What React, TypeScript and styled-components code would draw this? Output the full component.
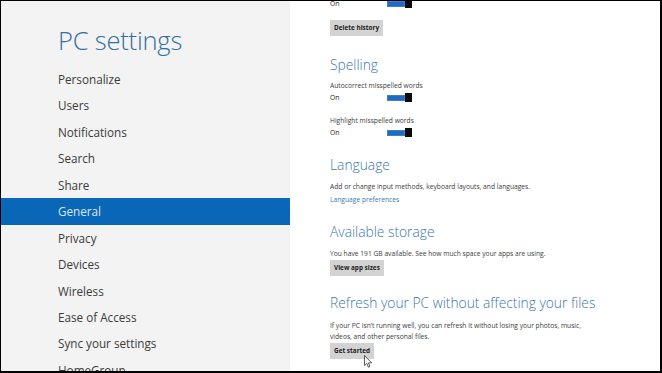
import React from "react";
import styled, { createGlobalStyle } from "styled-components";

const Global = createGlobalStyle`
  html, body { margin: 0; padding: 0; background: #ffffff; }
  * { box-sizing: border-box; }
`;

const Frame = styled.div`
  width: 662px;
  height: 373px;
  border-style: solid;
  border-color: #000;
  border-width: 1px 2px 2px 1px;
  display: flex;
  overflow: hidden;
  position: relative;
  background: #ffffff;
  font-family: "Open Sans", "Noto Sans", sans-serif;
`;

const Sidebar = styled.nav`
  width: 289px;
  flex: none;
  background: #f3f3f3;
  padding-top: 21px;
  display: flex;
  flex-direction: column;
`;

const Title = styled.h1`
  margin: 0;
  padding-left: 57px;
  font-size: 25.5px;
  line-height: 36px;
  font-weight: 300;
  color: #336f9f;
  letter-spacing: -0.2px;
`;

const NavList = styled.ul`
  list-style: none;
  margin: 8px 0 0;
  padding: 0;
`;

const NavItem = styled.li<{ $active?: boolean }>`
  height: 26.45px;
  line-height: 26.45px;
  padding-left: 57px;
  font-size: 11.7px;
  color: ${(p) => (p.$active ? "#dbe9f7" : "#3a3a3a")};
  background: ${(p) => (p.$active ? "#0a66b6" : "transparent")};
  white-space: nowrap;
`;

const Main = styled.main`
  flex: 1;
  padding-left: 40px;
  display: flex;
  flex-direction: column;
  align-items: flex-start;
`;

const Heading = styled.h2<{ $mt: number }>`
  margin: ${(p) => p.$mt}px 0 0;
  font-size: 13.8px;
  line-height: 20px;
  height: 20px;
  font-weight: 300;
  color: #3a78a9;
  white-space: nowrap;
`;

const Text = styled.p<{ $mt: number; $link?: boolean }>`
  margin: ${(p) => p.$mt}px 0 0;
  font-size: 6.7px;
  line-height: 11px;
  color: ${(p) => (p.$link ? "#3b78b5" : "#3c3c3c")};
  white-space: nowrap;
`;

const ToggleRow = styled.div<{ $mt: number }>`
  margin-top: ${(p) => p.$mt}px;
  height: 9px;
  display: flex;
  align-items: center;
`;

const ToggleLabel = styled.span`
  width: 57px;
  font-size: 6.8px;
  line-height: 9px;
  color: #222;
`;

const Track = styled.span`
  width: 25px;
  height: 9px;
  display: flex;
  align-items: center;
`;

const Fill = styled.span`
  width: 18px;
  height: 6px;
  background: #1d6cc2;
  border: 1px solid #3f7fc7;
`;

const Thumb = styled.span`
  width: 7px;
  height: 9px;
  background: #0b0b0b;
`;

const Button = styled.button<{ $mt: number }>`
  margin: ${(p) => p.$mt}px 0 0;
  height: 16px;
  padding: 0 4px;
  border: none;
  background: #d3d3d3;
  font-family: "Open Sans", "Noto Sans", sans-serif;
  font-size: 6.4px;
  font-weight: 700;
  color: #1c1c1c;
  line-height: 16px;
  white-space: nowrap;
`;

const Cursor = styled.svg`
  position: absolute;
  left: 363px;
  top: 354px;
`;

const Toggle = ({ mt }: { mt: number }) => (
  <ToggleRow $mt={mt}>
    <ToggleLabel>On</ToggleLabel>
    <Track>
      <Fill />
      <Thumb />
    </Track>
  </ToggleRow>
);

const navItems = [
  "Personalize",
  "Users",
  "Notifications",
  "Search",
  "Share",
  "General",
  "Privacy",
  "Devices",
  "Wireless",
  "Ease of Access",
  "Sync your settings",
  "HomeGroup",
];

export default function App() {
  return (
    <>
      <Global />
      <Frame>
        <Sidebar>
          <Title>PC settings</Title>
          <NavList>
            {navItems.map((n) => (
              <NavItem key={n} $active={n === "General"}>
                {n}
              </NavItem>
            ))}
          </NavList>
        </Sidebar>
        <Main>
          <Toggle mt={-2} />
          <Button $mt={12}>Delete history</Button>
          <Heading $mt={19}>Spelling</Heading>
          <Text $mt={4.5}>Autocorrect misspelled words</Text>
          <Toggle mt={2.5} />
          <Text $mt={12.5}>Highlight misspelled words</Text>
          <Toggle mt={2.5} />
          <Heading $mt={18}>Language</Heading>
          <Text $mt={6}>Add or change input methods, keyboard layouts, and languages.</Text>
          <Text $mt={1.5} $link>
            Language preferences
          </Text>
          <Heading $mt={17.5}>Available storage</Heading>
          <Text $mt={5.5}>You have 191 GB available. See how much space your apps are using.</Text>
          <Button $mt={1.5}>View app sizes</Button>
          <Heading $mt={17}>Refresh your PC without affecting your files</Heading>
          <Text $mt={7}>
            If your PC isn’t running well, you can refresh it without losing your photos, music,
            <br />
            videos, and other personal files.
          </Text>
          <Button $mt={1}>Get started</Button>
        </Main>
        <Cursor width="9" height="13" viewBox="0 0 9 13">
          <path
            d="M0.5 0.5 L0.5 10.5 L2.8 8.4 L4.4 12.2 L5.9 11.6 L4.4 7.9 L7.6 7.9 Z"
            fill="#ffffff"
            stroke="#333"
            strokeWidth="0.8"
            strokeLinejoin="round"
          />
        </Cursor>
      </Frame>
    </>
  );
}
